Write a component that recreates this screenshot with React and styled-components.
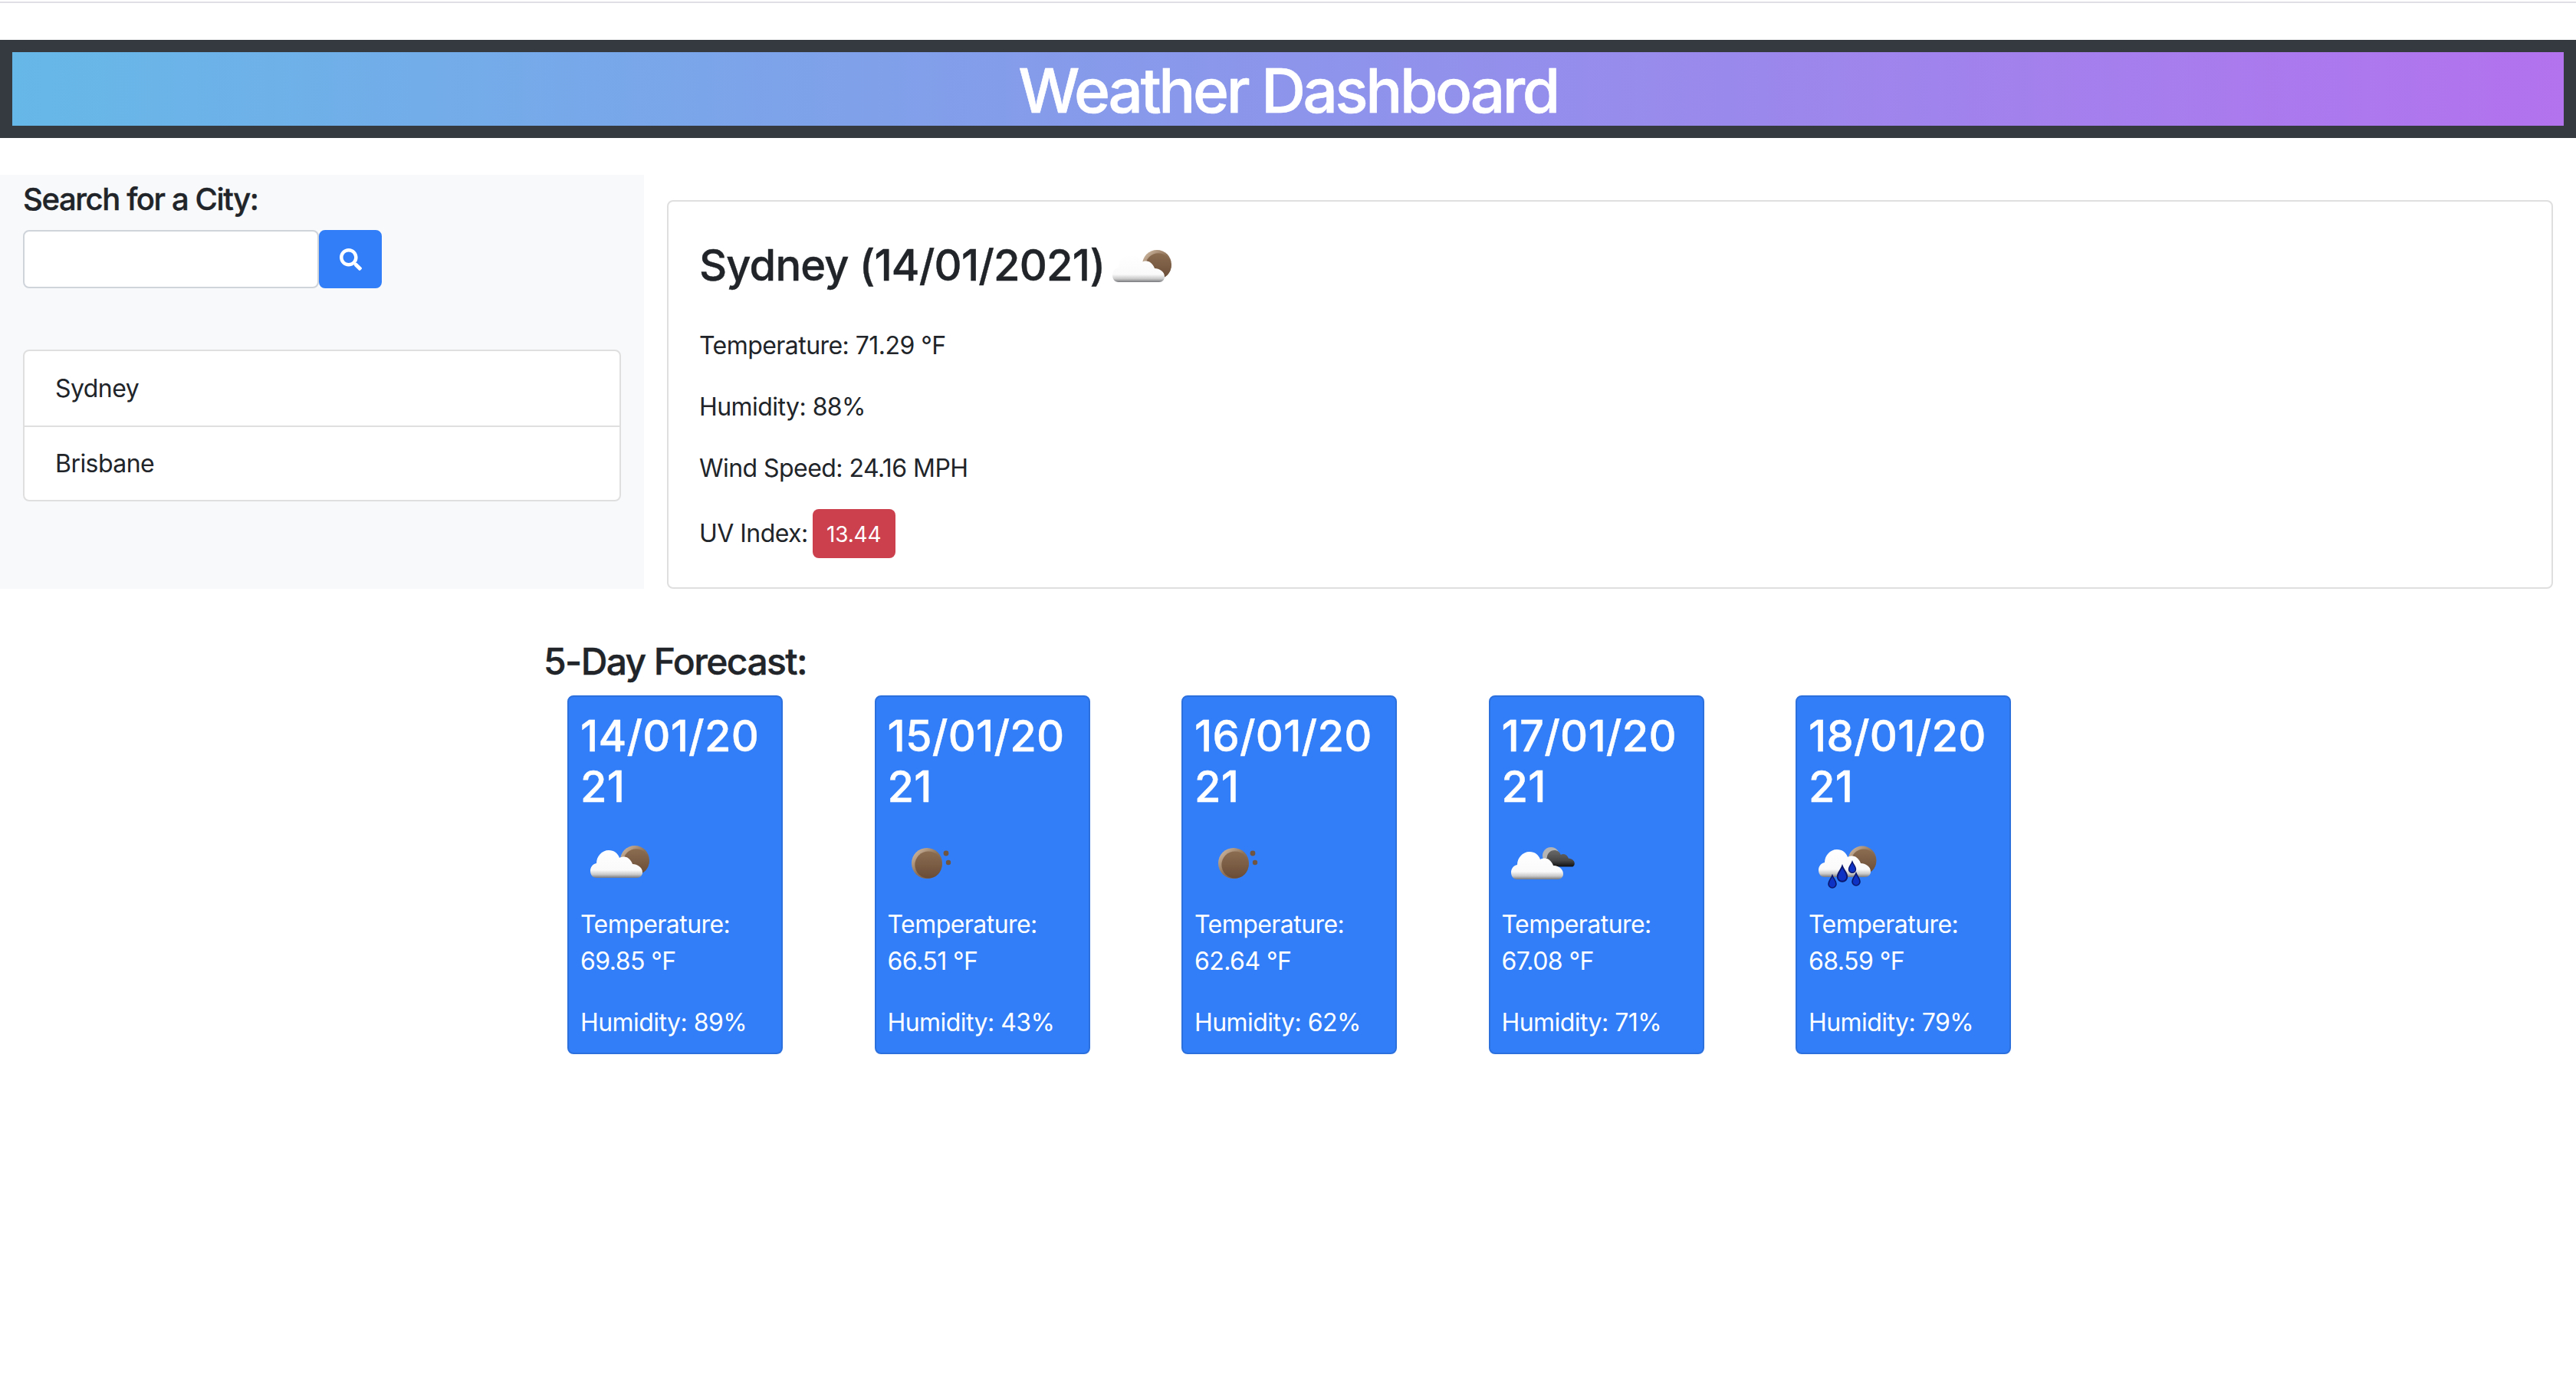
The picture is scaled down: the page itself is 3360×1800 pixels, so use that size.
import React from 'react';
import styled, { createGlobalStyle } from 'styled-components';
import { FaSearch } from 'react-icons/fa';

const forecast = [
  { date: '14/01/2021', icon: 'fewClouds', temp: '69.85', humidity: '89' },
  { date: '15/01/2021', icon: 'moon', temp: '66.51', humidity: '43' },
  { date: '16/01/2021', icon: 'moon', temp: '62.64', humidity: '62' },
  { date: '17/01/2021', icon: 'darkClouds', temp: '67.08', humidity: '71' },
  { date: '18/01/2021', icon: 'rain', temp: '68.59', humidity: '79' },
];

// 68 x 36 cloud, tall lobe on the left and two low lobes on the right
const CLOUD =
  'M8 36C3 36 0 32 0 27C0 22 3 18 8 17C8 8 15 0 24 0C31 0 36 4 38 10C41 8 46 8 49 10C52 12 54 15 55 18C61 18 68 22 68 29C68 33 65 36 61 36Z';

const Moon = ({ x, y, r }) => (
  <g>
    <circle cx={x} cy={y} r={r} fill="url(#moonRim)" />
    <circle cx={x + r * 0.1} cy={y + r * 0.1} r={r * 0.88} fill="url(#moonFace)" />
  </g>
);

const Cloud = ({ x, y, scale = 1, dark }) => (
  <path
    d={CLOUD}
    transform={`translate(${x} ${y}) scale(${scale})`}
    fill={dark ? 'url(#cloudDark)' : 'url(#cloudLight)'}
  />
);

const Drop = ({ x, y, s = 1 }) => (
  <path
    d="M0-9C2-4 5-2 5 2a5 5 0 0 1-10 0C-5-2-2-4 0-9z"
    transform={`translate(${x} ${y}) scale(${s})`}
    fill="#0c33c4"
    stroke="#08186e"
    strokeWidth="1.6"
  />
);

const WeatherIcon = ({ type }) => (
  <IconSvg viewBox="0 0 100 100">
    <defs>
      <linearGradient id="cloudLight" x1="0" y1="0" x2="0" y2="1">
        <stop offset="0" stopColor="#ffffff" />
        <stop offset="0.72" stopColor="#fafafa" />
        <stop offset="0.88" stopColor="#c9c9c9" />
        <stop offset="1" stopColor="#77787c" />
      </linearGradient>
      <linearGradient id="cloudDark" x1="0" y1="0" x2="0" y2="1">
        <stop offset="0" stopColor="#6a6a6a" />
        <stop offset="0.6" stopColor="#484848" />
        <stop offset="1" stopColor="#111111" />
      </linearGradient>
      <linearGradient id="moonRim" x1="0" y1="0" x2="1" y2="1">
        <stop offset="0" stopColor="#d9c4ae" />
        <stop offset="0.5" stopColor="#8f7257" />
        <stop offset="1" stopColor="#6f5440" />
      </linearGradient>
      <linearGradient id="moonFace" x1="0" y1="0" x2="0" y2="1">
        <stop offset="0" stopColor="#8b6d52" />
        <stop offset="1" stopColor="#6a4c36" />
      </linearGradient>
      <filter id="soft" x="-10%" y="-10%" width="120%" height="120%">
        <feGaussianBlur stdDeviation="0.7" />
      </filter>
    </defs>
    <g filter="url(#soft)">
      {type === 'fewClouds' && (
        <>
          <Moon x={71} y={46} r={19} />
          <Cloud x={13} y={33} />
        </>
      )}
      {type === 'moon' && (
        <>
          <Moon x={51} y={50} r={20} />
          <circle cx={76} cy={37} r={3.4} fill="#6f5542" />
          <circle cx={79} cy={49} r={3.2} fill="#6f5542" />
        </>
      )}
      {type === 'darkClouds' && (
        <>
          <circle cx={64} cy={40} r={11} fill="#b4b4b4" />
          <Cloud x={54} y={33} scale={0.6} dark />
          <Cloud x={12} y={35} />
        </>
      )}
      {type === 'rain' && (
        <>
          <Moon x={70} y={46} r={18.5} />
          <Cloud x={13} y={32} />
          <Drop x={57} y={56} s={0.9} />
          <Drop x={44} y={65} s={1.25} />
          <Drop x={62} y={72} s={1} />
          <Drop x={31} y={75} s={1} />
        </>
      )}
    </g>
  </IconSvg>
);

const App = () => {
  return (
    <>
      <GlobalStyle />
      <TopLine />
      <Header>
        <HeaderTitle>Weather Dashboard</HeaderTitle>
      </Header>
      <Content>
        <Sidebar>
          <SearchLabel>Search for a City:</SearchLabel>
          <SearchRow>
            <SearchInput type="text" />
            <SearchButton type="button" aria-label="Search">
              <FaSearch />
            </SearchButton>
          </SearchRow>
          <CityList>
            <CityItem>Sydney</CityItem>
            <CityItem>Brisbane</CityItem>
          </CityList>
        </Sidebar>
        <CurrentCard>
          <CityTitle>
            Sydney (14/01/2021)
            <CurrentIcon>
              <WeatherIcon type="fewClouds" />
            </CurrentIcon>
          </CityTitle>
          <Stat>Temperature: 71.29 °F</Stat>
          <Stat>Humidity: 88%</Stat>
          <Stat>Wind Speed: 24.16 MPH</Stat>
          <UvRow>
            UV Index: <UvBadge>13.44</UvBadge>
          </UvRow>
        </CurrentCard>
      </Content>
      <Forecast>
        <ForecastTitle>5-Day Forecast:</ForecastTitle>
        <ForecastRow>
          {forecast.map((day) => (
            <DayCard key={day.date}>
              <DayDate>{day.date}</DayDate>
              <DayIcon>
                <WeatherIcon type={day.icon} />
              </DayIcon>
              <DayStat>Temperature: {day.temp} °F</DayStat>
              <DayStat>Humidity: {day.humidity}%</DayStat>
            </DayCard>
          ))}
        </ForecastRow>
      </Forecast>
    </>
  );
};

export default App;

const GlobalStyle = createGlobalStyle`
  * {
    box-sizing: border-box;
  }
  body {
    margin: 0;
    background: #fff;
    color: #212529;
    font-family: Inter, "Liberation Sans", sans-serif;
    font-size: 32px;
    line-height: 48px;
    letter-spacing: -0.55px;
  }
`;

const TopLine = styled.div`
  height: 2px;
  margin-top: 2px;
  background: #e0dfe6;
`;

const Header = styled.header`
  height: 128px;
  margin-top: 48px;
  border: 16px solid #343a40;
  background: linear-gradient(90deg, #66b8e8 0%, #b372ee 100%);
`;

const HeaderTitle = styled.h1`
  margin: 0;
  color: #fff;
  font-size: 80px;
  font-weight: 500;
  line-height: 100px;
  letter-spacing: -3.4px;
  text-align: center;
  -webkit-text-stroke: 0.6px #fff;
`;

const Content = styled.main`
  display: flex;
  margin-top: 48px;
  padding-right: 30px;
`;

const Sidebar = styled.aside`
  flex: 0 0 840px;
  height: 540px;
  padding: 8px 30px 0;
  background: #f8f9fa;
`;

const SearchLabel = styled.h5`
  margin: 0 0 16px;
  font-size: 40px;
  font-weight: 500;
  line-height: 48px;
  letter-spacing: -1.4px;
  -webkit-text-stroke: 0.4px #212529;
`;

const SearchRow = styled.div`
  display: flex;
`;

const SearchInput = styled.input`
  width: 386px;
  height: 76px;
  border: 2px solid #ced4da;
  border-radius: 8px;
  background: #fff;
`;

const SearchButton = styled.button`
  display: flex;
  align-items: center;
  justify-content: center;
  width: 82px;
  height: 76px;
  padding: 0;
  border: 2px solid #317ef8;
  border-radius: 8px;
  background: #317ef8;
  color: #fff;
  font-size: 29px;
`;

const CityList = styled.ul`
  margin: 80px 0 0;
  padding: 0;
  list-style: none;
  border: 2px solid #dfdfe0;
  border-radius: 8px;
  background: #fff;
`;

const CityItem = styled.li`
  height: 97px;
  padding: 25px 40px 0;
  & + & {
    padding-top: 24px;
    border-top: 2px solid #dfdfe0;
  }
`;

const CurrentCard = styled.section`
  flex: 1;
  height: 507px;
  margin: 33px 0 0 30px;
  padding: 50px 40px 0;
  border: 2px solid #dfdfdf;
  border-radius: 8px;
`;

const CityTitle = styled.h3`
  display: flex;
  align-items: center;
  height: 66px;
  margin: 0 0 48px;
  font-size: 56px;
  font-weight: 500;
  line-height: 66px;
  letter-spacing: -0.85px;
  -webkit-text-stroke: 0.4px #212529;
`;

const CurrentIcon = styled.span`
  display: block;
  margin: 6px 0 0 -3px;
`;

const Stat = styled.p`
  margin: 0 0 32px;
`;

const UvRow = styled.p`
  display: flex;
  align-items: center;
  gap: 6px;
  margin: -3px 0 0;
`;

const UvBadge = styled.span`
  display: flex;
  align-items: center;
  justify-content: center;
  width: 108px;
  height: 64px;
  padding-top: 2px;
  border-radius: 8px;
  background: #cb404c;
  color: #fff;
  font-size: 28px;
  letter-spacing: -0.2px;
`;

const Forecast = styled.section`
  margin-top: 66px;
  padding-left: 709px;
`;

const ForecastTitle = styled.h4`
  margin: 0 0 15px;
  font-size: 48px;
  font-weight: 500;
  line-height: 58px;
  letter-spacing: -1.6px;
  -webkit-text-stroke: 0.4px #212529;
`;

const ForecastRow = styled.div`
  display: flex;
  gap: 119.5px;
  padding-left: 31px;
`;

const DayCard = styled.article`
  width: 281px;
  height: 468px;
  padding: 18px 15px 0;
  border: 2px solid #2c70de;
  border-radius: 8px;
  background: #317ef8;
  color: #fff;
`;

const DayDate = styled.h3`
  margin: 0 0 17px;
  font-size: 56px;
  font-weight: 500;
  line-height: 66px;
  letter-spacing: 0.2px;
  word-break: break-all;
  -webkit-text-stroke: 0.4px #fff;
`;

const DayIcon = styled.div`
  margin-bottom: 6px;
`;

const IconSvg = styled.svg`
  display: block;
  flex: none;
  width: 100px;
  height: 100px;
`;

const DayStat = styled.p`
  margin: 0 0 32px;
  &:last-child {
    margin-bottom: 0;
  }
`;
